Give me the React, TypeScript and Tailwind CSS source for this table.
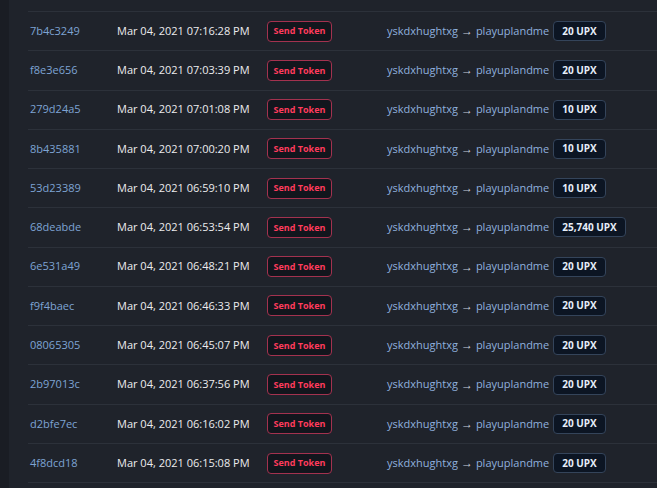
import React from "react";

const rows: [string, string, string][] = [
  ["7b4c3249", "Mar 04, 2021 07:16:28 PM", "20 UPX"],
  ["f8e3e656", "Mar 04, 2021 07:03:39 PM", "20 UPX"],
  ["279d24a5", "Mar 04, 2021 07:01:08 PM", "10 UPX"],
  ["8b435881", "Mar 04, 2021 07:00:20 PM", "10 UPX"],
  ["53d23389", "Mar 04, 2021 06:59:10 PM", "10 UPX"],
  ["68deabde", "Mar 04, 2021 06:53:54 PM", "25,740 UPX"],
  ["6e531a49", "Mar 04, 2021 06:48:21 PM", "20 UPX"],
  ["f9f4baec", "Mar 04, 2021 06:46:33 PM", "20 UPX"],
  ["08065305", "Mar 04, 2021 06:45:07 PM", "20 UPX"],
  ["2b97013c", "Mar 04, 2021 06:37:56 PM", "20 UPX"],
  ["d2bfe7ec", "Mar 04, 2021 06:16:02 PM", "20 UPX"],
  ["4f8dcd18", "Mar 04, 2021 06:15:08 PM", "20 UPX"],
];

export default function App() {
  return (
    <div
      className="flex h-[488px] w-[657px] overflow-hidden bg-[#1f232b]"
      style={{ fontFamily: '"Open Sans", "Noto Sans", sans-serif' }}
    >
      <div className="w-[9px] shrink-0 bg-[#1a1d24]" />
      <div className="flex-1 pl-[19px] pt-[11px]">
        <div className="border-t border-[#2c313a]">
          {rows.map(([hash, date, amt]) => (
            <div
              key={hash}
              className="flex h-[39.27px] items-center border-b border-[#2c313a] text-[11px]"
            >
              <div className="w-[89px] pl-[2px] text-[#7ea3d4]">{hash}</div>
              <div className="w-[150px] text-[#ececee]">{date}</div>
              <div className="w-[120px]">
                <span className="inline-flex h-[21px] w-[65px] items-center justify-center rounded-[4px] border border-[#a3324f] bg-[#12161d] text-[9px] font-bold text-[#ff3b5c]">
                  Send Token
                </span>
              </div>
              <div className="flex items-center text-[#8fb0de]">
                <span>yskdxhughtxg</span>
                <span className="mx-[3px] text-[12px] leading-none text-[#c8d0dc]">→</span>
                <span>playuplandme</span>
                <span className="ml-[4px] inline-flex h-[20px] items-center rounded-[4px] border border-[#34445a] bg-[#0c1523] px-[8px] text-[10px] font-bold text-[#e6eefa]">
                  {amt}
                </span>
              </div>
            </div>
          ))}
        </div>
      </div>
    </div>
  );
}
